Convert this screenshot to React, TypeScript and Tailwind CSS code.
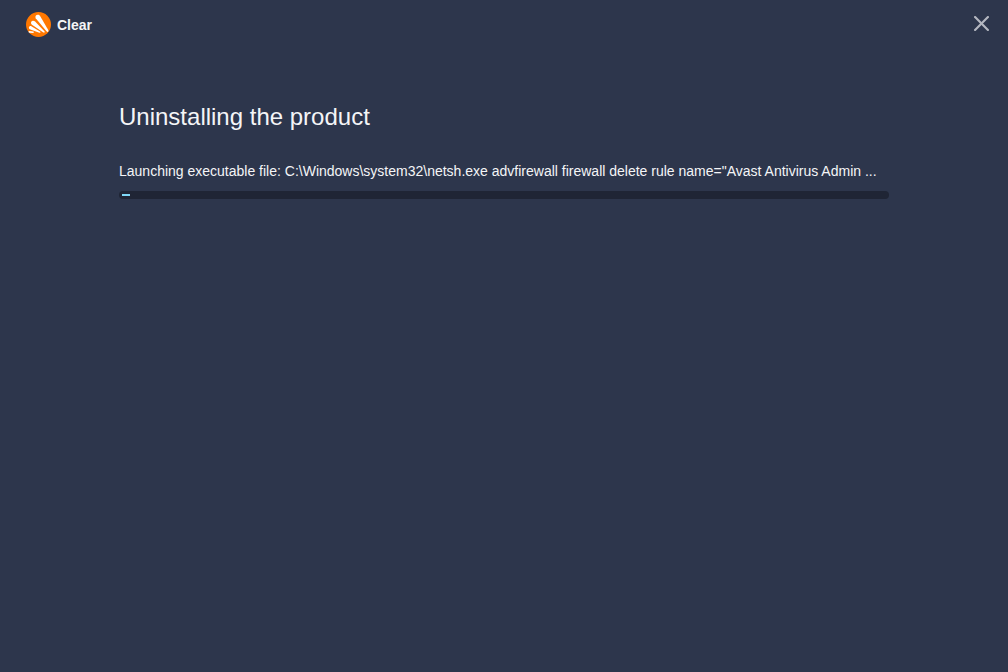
import { X } from "lucide-react";

const STATUS =
  'Launching executable file: C:\\Windows\\system32\\netsh.exe advfirewall firewall delete rule name="Avast Antivirus Admin ...';

const PROGRESS = 1;

function Logo() {
  return (
    <svg viewBox="0 0 25 25" className="size-[25px]" aria-hidden="true">
      <circle cx="12.5" cy="12.5" r="12.5" fill="#ff7800" />
      <g fill="#fff">
        <path d="M9.7 6.2C8.800 4.400 10 2.700 11.800 2.700c1.200 0 2 .7 2.600 1.700l7.800 13.700c.8 1.600-.5 2.500-1.700 1.100z" />
        <path d="M5.600 12.400C4.400 11 5 9 6.700 8.700c1-.1 1.700.3 2.400.9l9.300 9.700c.8 1 0 1.700-1 1.100z" />
        <path d="M3.700 17.200c-1.200-.9-1-2.600 0-3 .7-.3 1.300-.2 2 .2l8.300 5.100c.9.700.5 1.400-.6 1.200z" />
        <path d="M3.400 20.800c-1-.4-1.300-1.700 0-1.900l3.800.7c1 .3.800 1.200 0 1.300z" />
      </g>
    </svg>
  );
}

function TitleBar() {
  return (
    <header className="flex items-start justify-between py-3 pr-[19px] pl-[26px]">
      <div className="flex items-center gap-1.5">
        <Logo />
        <span className="pt-px text-sm font-bold">Clear</span>
      </div>
      <button type="button" aria-label="Close" className="mt-1 text-[#b4b7c0]">
        <X className="size-[15px]" viewBox="5 5 14 14" strokeWidth={2} />
      </button>
    </header>
  );
}

export default function App() {
  return (
    <div className="min-h-screen bg-[#2d364c] font-['Liberation_Sans',Arial,sans-serif] text-[#f4f5f7]">
      <TitleBar />
      <main className="px-[119px] pt-[52px]">
        <h1 className="text-2xl">Uninstalling the product</h1>
        <p id="status" className="mt-7 truncate text-sm">
          {STATUS}
        </p>
        <div
          role="progressbar"
          aria-labelledby="status"
          aria-valuenow={PROGRESS}
          aria-valuemin={0}
          aria-valuemax={100}
          className="mt-2.5 h-2 rounded bg-[#1f2535] px-[3px] py-[3px]"
        >
          <div className="h-0.5 bg-[#7fd8f7]" style={{ width: `${PROGRESS}%` }} />
        </div>
      </main>
    </div>
  );
}
